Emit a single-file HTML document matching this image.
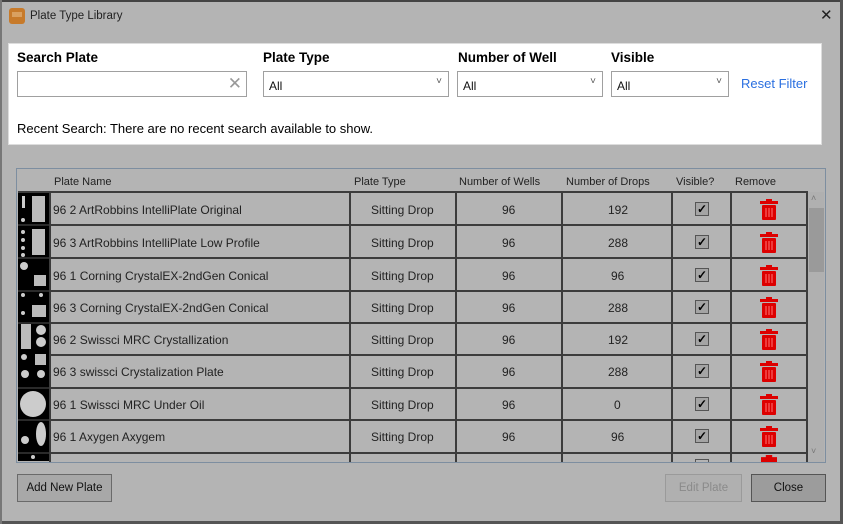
<!DOCTYPE html>
<html><head><meta charset="utf-8"><style>
*{margin:0;padding:0;box-sizing:border-box}
body{width:843px;height:524px;background:#b4b4b4;font-family:"Liberation Sans",sans-serif;position:relative;overflow:hidden;color:#111}
.a{position:absolute}
.hl{position:absolute;left:18px;width:789px;height:2px;background:#3c3c3c}
.vl{position:absolute;top:191px;height:271px;width:2px;background:#3c3c3c}
.r{position:absolute;left:0;width:843px;height:33px;font-size:12px;color:#222}
.r span{position:absolute;top:10px}
.cb{position:absolute;left:695px;top:9px;width:14px;height:14px;border:1px solid #555;background:#a4a4a4;font-size:12px;line-height:12px;text-align:center;font-weight:bold;color:#000}
.tr{position:absolute;left:759px;top:6px}
.th{position:absolute;top:176px;font-size:11px;color:#222}
.sel{position:absolute;top:71px;height:26px;border:1px solid #a0a0a0;background:#fff;font-size:12px;padding:7px 0 0 5px}
.sel i{position:absolute;right:6px;top:4px;font-style:normal;font-size:10px;color:#555}
.lab{position:absolute;top:50px;font-weight:bold;font-size:13.5px;color:#000}
.btn{position:absolute;top:474px;height:28px;border:1px solid #6a6a6a;background:#a8a8a8;font-size:11.5px;text-align:center;line-height:26px}
</style></head><body>
<div class="a" style="left:0;top:0;width:843px;height:2px;background:#444"></div>
<div class="a" style="left:840px;top:0;width:3px;height:524px;background:#555"></div>
<div class="a" style="left:0;top:521px;width:843px;height:3px;background:#555"></div>
<div class="a" style="left:0;top:0;width:2px;height:524px;background:#777"></div>
<div class="a" style="left:9px;top:8px;width:16px;height:16px;border-radius:3px;background:#c77a2a"></div>
<div class="a" style="left:12px;top:12px;width:10px;height:5px;background:#d9a060"></div>
<div class="a" style="left:30px;top:10px;font-size:11.5px;color:#222">Plate Type Library</div>
<div class="a" style="left:820px;top:6px;font-size:15px;color:#222">✕</div>

<div class="a" style="left:8px;top:43px;width:814px;height:102px;background:#fff;border:1px solid #ddd"></div>
<div class="lab" style="left:17px">Search Plate</div>
<div class="lab" style="left:263px">Plate Type</div>
<div class="lab" style="left:458px">Number of Well</div>
<div class="lab" style="left:611px">Visible</div>
<div class="sel" style="left:17px;width:230px"><i style="font-size:17px;top:2px;color:#999;right:4px">✕</i></div>
<div class="sel" style="left:263px;width:186px">All<i>˅</i></div>
<div class="sel" style="left:457px;width:146px">All<i>˅</i></div>
<div class="sel" style="left:611px;width:118px">All<i>˅</i></div>
<div class="a" style="left:741px;top:76px;font-size:13px;color:#2a6fe0">Reset Filter</div>
<div class="a" style="left:17px;top:121px;font-size:13px;color:#000">Recent Search: There are no recent search available to show.</div>

<div class="a" style="left:16px;top:168px;width:810px;height:295px;border:1px solid #7d8ea0"></div>
<div class="a" style="left:808px;top:192px;width:16px;height:270px;background:#b0b0b0"></div>
<div class="a" style="left:809px;top:208px;width:15px;height:64px;background:#9a9a9a"></div>
<div class="a" style="left:811px;top:193px;font-size:9px;color:#777">˄</div>
<div class="a" style="left:811px;top:446px;font-size:9px;color:#777">˅</div>
<div class="th" style="left:54px">Plate Name</div>
<div class="th" style="left:354px">Plate Type</div>
<div class="th" style="left:459px">Number of Wells</div>
<div class="th" style="left:566px">Number of Drops</div>
<div class="th" style="left:676px">Visible?</div>
<div class="th" style="left:735px">Remove</div>

<div class="hl" style="top:191px"></div><div class="hl" style="top:224px"></div><div class="hl" style="top:257px"></div><div class="hl" style="top:290px"></div><div class="hl" style="top:322px"></div><div class="hl" style="top:354px"></div><div class="hl" style="top:387px"></div><div class="hl" style="top:419px"></div><div class="hl" style="top:452px"></div>
<div class="vl" style="left:49px"></div><div class="vl" style="left:349px"></div><div class="vl" style="left:455px"></div><div class="vl" style="left:561px"></div><div class="vl" style="left:671px"></div><div class="vl" style="left:730px"></div><div class="vl" style="left:806px"></div>

<svg class="a" style="left:18px;top:193px" width="31" height="268">
<rect x="0" y="0" width="31" height="268" fill="#000"/>
<rect x="4" y="3" width="3" height="12" fill="#ccc"/><circle cx="5" cy="27" r="2" fill="#ccc"/><rect x="14" y="3" width="13" height="26" fill="#bbb"/>
<circle cx="5" cy="39" r="2" fill="#ccc"/><circle cx="5" cy="47" r="2" fill="#ccc"/><circle cx="5" cy="55" r="2" fill="#ccc"/><circle cx="5" cy="62" r="2" fill="#ccc"/><rect x="14" y="36" width="13" height="26" fill="#bbb"/>
<circle cx="6" cy="73" r="4" fill="#ccc"/><rect x="16" y="82" width="12" height="11" fill="#bbb"/>
<circle cx="5" cy="102" r="2" fill="#ccc"/><circle cx="23" cy="102" r="2" fill="#ccc"/><circle cx="5" cy="120" r="2" fill="#ccc"/><rect x="14" y="112" width="14" height="12" fill="#bbb"/>
<rect x="3" y="131" width="10" height="25" fill="#bbb"/><circle cx="23" cy="137" r="5" fill="#ccc"/><circle cx="23" cy="149" r="5" fill="#ccc"/>
<circle cx="6" cy="164" r="3" fill="#ccc"/><rect x="17" y="161" width="11" height="11" fill="#bbb"/><circle cx="7" cy="181" r="4" fill="#ccc"/><circle cx="23" cy="181" r="4" fill="#ccc"/>
<circle cx="15" cy="211" r="13" fill="#ccc"/>
<circle cx="7" cy="247" r="4" fill="#ccc"/><ellipse cx="23" cy="241" rx="5" ry="12" fill="#ccc"/>
<circle cx="15" cy="264" r="2" fill="#ccc"/>
<line x1="0" y1="32" x2="31" y2="32" stroke="#555"/><line x1="0" y1="65" x2="31" y2="65" stroke="#555"/><line x1="0" y1="98" x2="31" y2="98" stroke="#555"/><line x1="0" y1="130" x2="31" y2="130" stroke="#555"/><line x1="0" y1="195" x2="31" y2="195" stroke="#555"/><line x1="0" y1="227" x2="31" y2="227" stroke="#555"/><line x1="0" y1="260" x2="31" y2="260" stroke="#555"/>
</svg>

<div class="r" style="top:193px"><span style="left:53px">96 2 ArtRobbins IntelliPlate Original</span><span style="left:371px">Sitting Drop</span><span style="left:502px">96</span><span style="left:608px">192</span><div class="cb">✓</div><svg class="tr" width="20" height="22"><rect x="1" y="2" width="18" height="3" fill="#d00"/><rect x="7" y="0" width="6" height="3" fill="#d00"/><rect x="3" y="6" width="14" height="15" rx="1" fill="#d00"/><path d="M7 9v9M10 9v9M13 9v9" stroke="#f77"/></svg></div>
<div class="r" style="top:226px"><span style="left:53px">96 3 ArtRobbins IntelliPlate Low Profile</span><span style="left:371px">Sitting Drop</span><span style="left:502px">96</span><span style="left:608px">288</span><div class="cb">✓</div><svg class="tr" width="20" height="22"><rect x="1" y="2" width="18" height="3" fill="#d00"/><rect x="7" y="0" width="6" height="3" fill="#d00"/><rect x="3" y="6" width="14" height="15" rx="1" fill="#d00"/><path d="M7 9v9M10 9v9M13 9v9" stroke="#f77"/></svg></div>
<div class="r" style="top:259px"><span style="left:53px">96 1 Corning CrystalEX-2ndGen Conical</span><span style="left:371px">Sitting Drop</span><span style="left:502px">96</span><span style="left:611px">96</span><div class="cb">✓</div><svg class="tr" width="20" height="22"><rect x="1" y="2" width="18" height="3" fill="#d00"/><rect x="7" y="0" width="6" height="3" fill="#d00"/><rect x="3" y="6" width="14" height="15" rx="1" fill="#d00"/><path d="M7 9v9M10 9v9M13 9v9" stroke="#f77"/></svg></div>
<div class="r" style="top:291px"><span style="left:53px">96 3 Corning CrystalEX-2ndGen Conical</span><span style="left:371px">Sitting Drop</span><span style="left:502px">96</span><span style="left:608px">288</span><div class="cb">✓</div><svg class="tr" width="20" height="22"><rect x="1" y="2" width="18" height="3" fill="#d00"/><rect x="7" y="0" width="6" height="3" fill="#d00"/><rect x="3" y="6" width="14" height="15" rx="1" fill="#d00"/><path d="M7 9v9M10 9v9M13 9v9" stroke="#f77"/></svg></div>
<div class="r" style="top:323px"><span style="left:53px">96 2 Swissci MRC Crystallization</span><span style="left:371px">Sitting Drop</span><span style="left:502px">96</span><span style="left:608px">192</span><div class="cb">✓</div><svg class="tr" width="20" height="22"><rect x="1" y="2" width="18" height="3" fill="#d00"/><rect x="7" y="0" width="6" height="3" fill="#d00"/><rect x="3" y="6" width="14" height="15" rx="1" fill="#d00"/><path d="M7 9v9M10 9v9M13 9v9" stroke="#f77"/></svg></div>
<div class="r" style="top:355px"><span style="left:53px">96 3 swissci Crystalization Plate</span><span style="left:371px">Sitting Drop</span><span style="left:502px">96</span><span style="left:608px">288</span><div class="cb">✓</div><svg class="tr" width="20" height="22"><rect x="1" y="2" width="18" height="3" fill="#d00"/><rect x="7" y="0" width="6" height="3" fill="#d00"/><rect x="3" y="6" width="14" height="15" rx="1" fill="#d00"/><path d="M7 9v9M10 9v9M13 9v9" stroke="#f77"/></svg></div>
<div class="r" style="top:388px"><span style="left:53px">96 1 Swissci MRC Under Oil</span><span style="left:371px">Sitting Drop</span><span style="left:502px">96</span><span style="left:614px">0</span><div class="cb">✓</div><svg class="tr" width="20" height="22"><rect x="1" y="2" width="18" height="3" fill="#d00"/><rect x="7" y="0" width="6" height="3" fill="#d00"/><rect x="3" y="6" width="14" height="15" rx="1" fill="#d00"/><path d="M7 9v9M10 9v9M13 9v9" stroke="#f77"/></svg></div>
<div class="r" style="top:420px"><span style="left:53px">96 1 Axygen Axygem</span><span style="left:371px">Sitting Drop</span><span style="left:502px">96</span><span style="left:611px">96</span><div class="cb">✓</div><svg class="tr" width="20" height="22"><rect x="1" y="2" width="18" height="3" fill="#d00"/><rect x="7" y="0" width="6" height="3" fill="#d00"/><rect x="3" y="6" width="14" height="15" rx="1" fill="#d00"/><path d="M7 9v9M10 9v9M13 9v9" stroke="#f77"/></svg></div>
<div class="a" style="left:695px;top:459px;width:14px;height:3px;border:1px solid #555;border-bottom:none"></div>
<div class="a" style="left:761px;top:455px;width:16px;height:7px;background:#d00;clip-path:polygon(30% 0,70% 0,70% 30%,100% 30%,100% 100%,0 100%,0 30%,30% 30%)"></div>

<div class="btn" style="left:17px;width:95px">Add New Plate</div>
<div class="btn" style="left:665px;width:77px;border-color:#9a9a9a;color:#8a8a8a;background:#b0b0b0">Edit Plate</div>
<div class="btn" style="left:751px;width:75px;background:#9c9c9c;border-color:#555">Close</div>
</body></html>
